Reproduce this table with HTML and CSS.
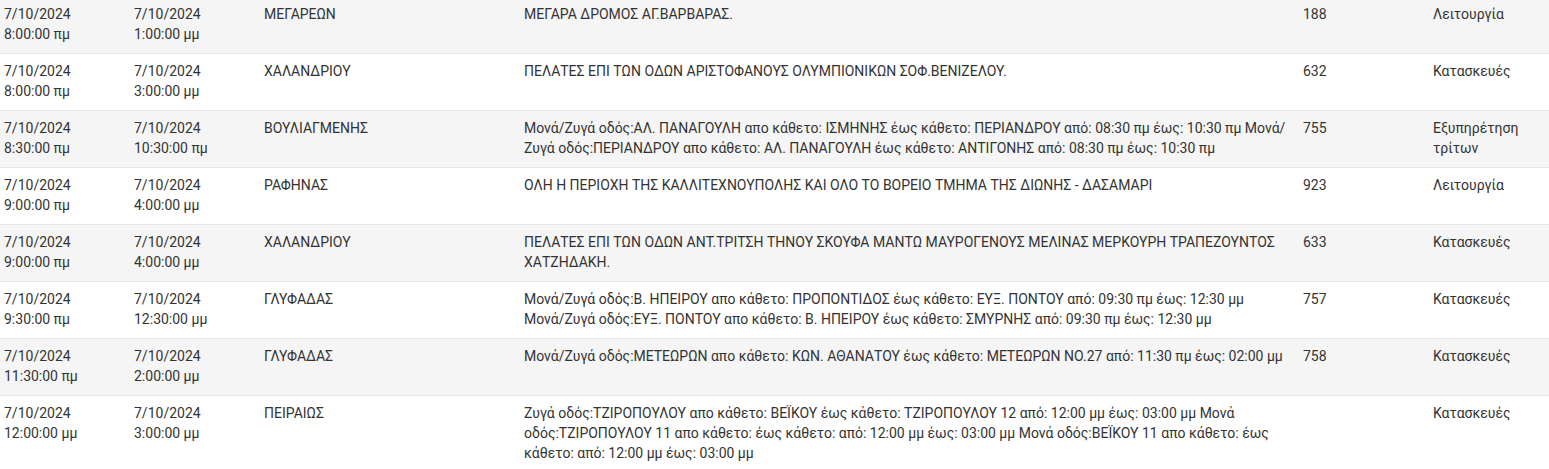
FILE: index.html
```html
<!DOCTYPE html>
<html lang="el">
<head>
<meta charset="utf-8">
<title>Διακοπές</title>
<link rel="stylesheet" href="styles.css">
</head>
<body>
<table class="outages">
<colgroup>
<col class="c-start"><col class="c-end"><col class="c-area"><col class="c-desc"><col class="c-num"><col class="c-type">
</colgroup>
<tbody>
<tr><td>7/10/2024<br>8:00:00 πμ</td><td>7/10/2024<br>1:00:00 μμ</td><td>ΜΕΓΑΡΕΩΝ</td><td>ΜΕΓΑΡΑ ΔΡΟΜΟΣ ΑΓ.ΒΑΡΒΑΡΑΣ.</td><td>188</td><td>Λειτουργία</td></tr>
<tr><td>7/10/2024<br>8:00:00 πμ</td><td>7/10/2024<br>3:00:00 μμ</td><td>ΧΑΛΑΝΔΡΙΟΥ</td><td>ΠΕΛΑΤΕΣ ΕΠΙ ΤΩΝ ΟΔΩΝ ΑΡΙΣΤΟΦΑΝΟΥΣ ΟΛΥΜΠΙΟΝΙΚΩΝ ΣΟΦ.ΒΕΝΙΖΕΛΟΥ.</td><td>632</td><td>Κατασκευές</td></tr>
<tr><td>7/10/2024<br>8:30:00 πμ</td><td>7/10/2024<br>10:30:00 πμ</td><td>ΒΟΥΛΙΑΓΜΕΝΗΣ</td><td>Μονά/Ζυγά οδός:ΑΛ. ΠΑΝΑΓΟΥΛΗ απο κάθετο: ΙΣΜΗΝΗΣ έως κάθετο: ΠΕΡΙΑΝΔΡΟΥ από: 08:30 πμ έως: 10:30 πμ Μονά/Ζυγά οδός:ΠΕΡΙΑΝΔΡΟΥ απο κάθετο: ΑΛ. ΠΑΝΑΓΟΥΛΗ έως κάθετο: ΑΝΤΙΓΟΝΗΣ από: 08:30 πμ έως: 10:30 πμ</td><td>755</td><td>Εξυπηρέτηση τρίτων</td></tr>
<tr><td>7/10/2024<br>9:00:00 πμ</td><td>7/10/2024<br>4:00:00 μμ</td><td>ΡΑΦΗΝΑΣ</td><td>ΟΛΗ Η ΠΕΡΙΟΧΗ ΤΗΣ ΚΑΛΛΙΤΕΧΝΟΥΠΟΛΗΣ ΚΑΙ ΟΛΟ ΤΟ ΒΟΡΕΙΟ ΤΜΗΜΑ ΤΗΣ ΔΙΩΝΗΣ - ΔΑΣΑΜΑΡΙ</td><td>923</td><td>Λειτουργία</td></tr>
<tr><td>7/10/2024<br>9:00:00 πμ</td><td>7/10/2024<br>4:00:00 μμ</td><td>ΧΑΛΑΝΔΡΙΟΥ</td><td>ΠΕΛΑΤΕΣ ΕΠΙ ΤΩΝ ΟΔΩΝ ΑΝΤ.ΤΡΙΤΣΗ ΤΗΝΟΥ ΣΚΟΥΦΑ ΜΑΝΤΩ ΜΑΥΡΟΓΕΝΟΥΣ ΜΕΛΙΝΑΣ ΜΕΡΚΟΥΡΗ ΤΡΑΠΕΖΟΥΝΤΟΣ ΧΑΤΖΗΔΑΚΗ.</td><td>633</td><td>Κατασκευές</td></tr>
<tr><td>7/10/2024<br>9:30:00 πμ</td><td>7/10/2024<br>12:30:00 μμ</td><td>ΓΛΥΦΑΔΑΣ</td><td>Μονά/Ζυγά οδός:Β. ΗΠΕΙΡΟΥ απο κάθετο: ΠΡΟΠΟΝΤΙΔΟΣ έως κάθετο: ΕΥΞ. ΠΟΝΤΟΥ από: 09:30 πμ έως: 12:30 μμ<br>Μονά/Ζυγά οδός:ΕΥΞ. ΠΟΝΤΟΥ απο κάθετο: Β. ΗΠΕΙΡΟΥ έως κάθετο: ΣΜΥΡΝΗΣ από: 09:30 πμ έως: 12:30 μμ</td><td>757</td><td>Κατασκευές</td></tr>
<tr><td>7/10/2024<br>11:30:00 πμ</td><td>7/10/2024<br>2:00:00 μμ</td><td>ΓΛΥΦΑΔΑΣ</td><td>Μονά/Ζυγά οδός:ΜΕΤΕΩΡΩΝ απο κάθετο: ΚΩΝ. ΑΘΑΝΑΤΟΥ έως κάθετο: ΜΕΤΕΩΡΩΝ ΝΟ.27 από: 11:30 πμ έως: 02:00 μμ</td><td>758</td><td>Κατασκευές</td></tr>
<tr><td>7/10/2024<br>12:00:00 μμ</td><td>7/10/2024<br>3:00:00 μμ</td><td>ΠΕΙΡΑΙΩΣ</td><td>Ζυγά οδός:ΤΖΙΡΟΠΟΥΛΟΥ απο κάθετο: ΒΕΪΚΟΥ έως κάθετο: ΤΖΙΡΟΠΟΥΛΟΥ 12 από: 12:00 μμ έως: 03:00 μμ Μονά οδός:ΤΖΙΡΟΠΟΥΛΟΥ 11 απο κάθετο: έως κάθετο: από: 12:00 μμ έως: 03:00 μμ Μονά οδός:ΒΕΪΚΟΥ 11 απο κάθετο: έως κάθετο: από: 12:00 μμ έως: 03:00 μμ</td><td></td><td>Κατασκευές</td></tr>
</tbody>
</table>
</body>
</html>
```
FILE: styles.css
```css
html, body {
  margin: 0;
  padding: 0;
  background: #ffffff;
}
body {
  font-family: Roboto, "Noto Sans", sans-serif;
  font-size: 14px;
  line-height: 20px;
  color: #333333;
  overflow: hidden;
}
.outages {
  width: 1549px;
  border-collapse: collapse;
  table-layout: fixed;
  margin-top: -3px;
}
.c-start, .c-end, .c-num { width: 130px; }
.c-area { width: 260px; }
.c-desc { width: 779px; }
.c-type { width: 120px; }
.outages td {
  padding: 7px 4px 9px;
  vertical-align: top;
  border-bottom: 1px solid #e6e6e6;
  text-align: left;
}
.outages tr:nth-child(odd) td {
  background: #f5f5f5;
}
```
